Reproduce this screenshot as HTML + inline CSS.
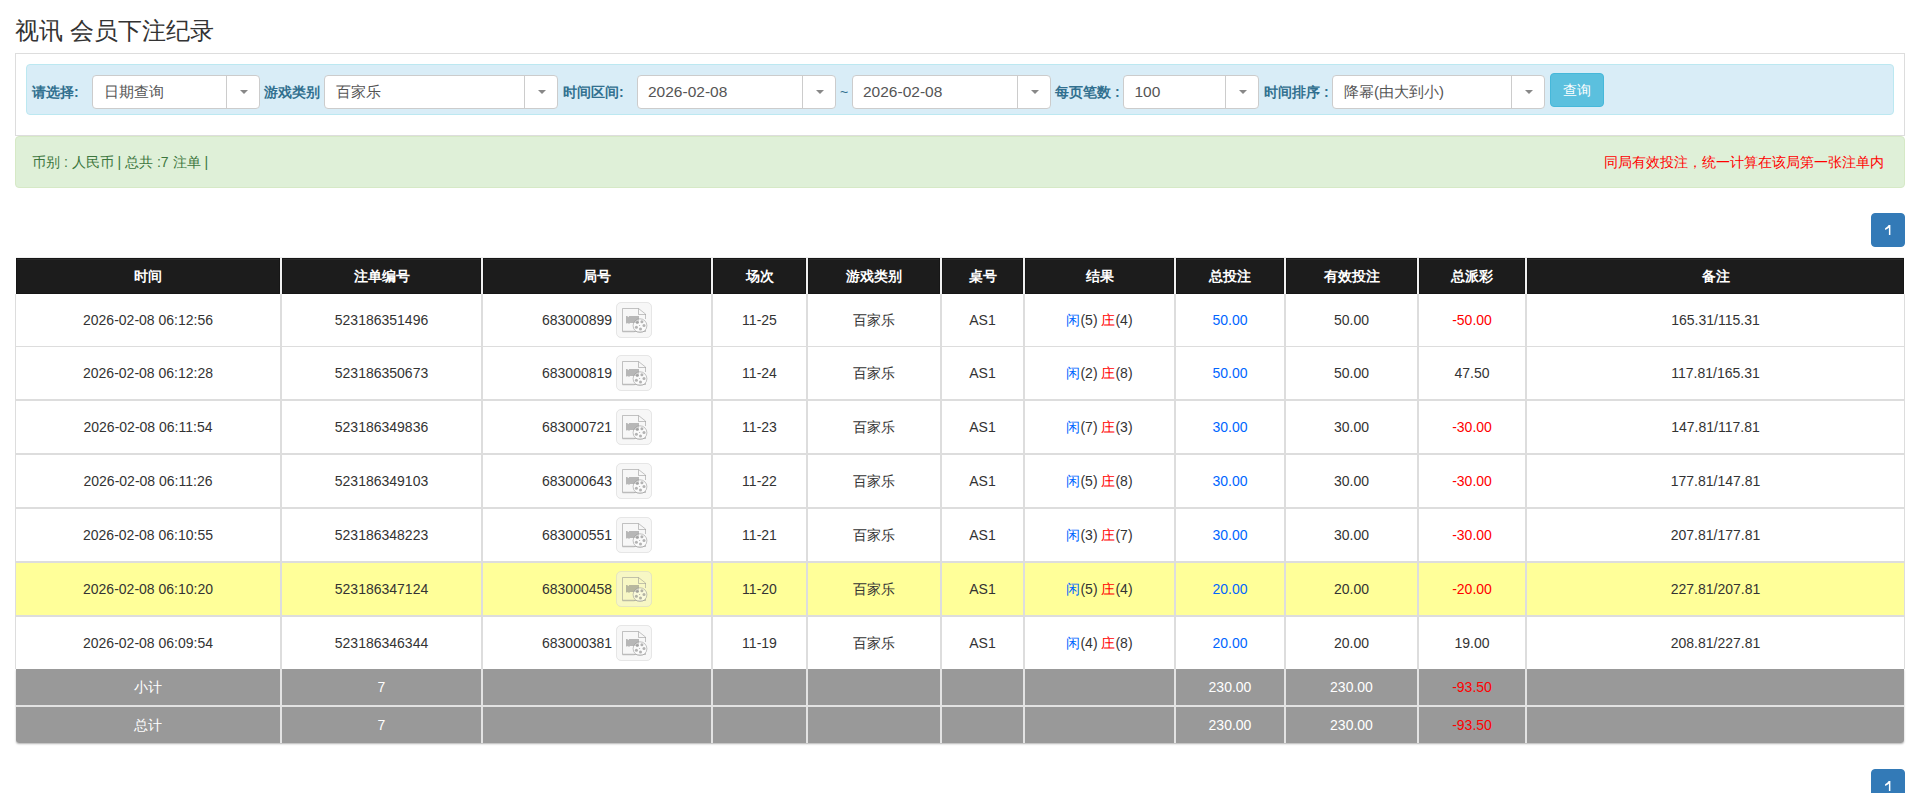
<!DOCTYPE html>
<html><head><meta charset="utf-8"><title>视讯 会员下注纪录</title>
<style>
*{box-sizing:border-box;margin:0;padding:0}
html,body{width:1919px;height:793px;overflow:hidden;background:#fff}
body{font-family:"Liberation Sans",sans-serif;font-size:14px;color:#333;position:relative}
.a{position:absolute}
.title{left:15px;top:14px;font-size:24px;line-height:34px;color:#333;white-space:nowrap}
.panel{left:15px;top:53px;width:1890px;height:83px;border:1px solid #ddd}
.info{left:26px;top:64px;width:1868px;height:51px;background:#d9edf7;border:1px solid #bce8f1;border-radius:4px}
.lbl{top:75px;height:34px;line-height:34px;font-size:14px;font-weight:bold;color:#31708f;white-space:nowrap}
.sel{top:75px;height:34px;background:#fff;border:1px solid #ccc;border-radius:4px}
.sel .t{position:absolute;left:10px;top:0;line-height:32px;font-size:15.5px;color:#555;white-space:nowrap}
.sel .t.c{font-size:15px;left:11px}
.sel .t.n{left:10.5px}
.sel .d{position:absolute;right:32px;top:0;bottom:0;width:1px;background:#ccc}
.sel .ar{position:absolute;right:11px;top:14px;width:0;height:0;border-left:4px solid transparent;border-right:4px solid transparent;border-top:4px solid #888}
.btn{left:1550px;top:73px;width:54px;height:34px;background:#5bc0de;border:1px solid #46b8da;border-radius:4px;color:#fff;font-size:14px;line-height:32px;text-align:center}
.ok{left:15px;top:136px;width:1890px;height:52px;background:#dff0d8;border:1px solid #d6e9c6;border-radius:4px}
.okt{left:32px;top:136px;height:52px;line-height:52px;color:#3c763d;font-size:14px;white-space:nowrap}
.red{left:1604px;top:136px;height:52px;line-height:52px;color:#f00;font-size:14px;white-space:nowrap}
.pg{left:1871px;width:34px;height:34px;background:#337ab7;border:1px solid #337ab7;border-radius:4px;color:#fff;text-align:center;line-height:32px;font-size:14px}
.th{top:258px;height:36px;background:#1c1c1c;border:1px solid #161616;box-shadow:inset 0 1px 0 #2a2a2a;color:#fff;font-weight:bold;text-align:center;line-height:34px;font-size:14px}
.td{text-align:center;white-space:nowrap;font-size:14px;color:#333}
.b{color:#0066ff}
.r{color:#f00}
</style></head><body>

<div class="a title">视讯 会员下注纪录</div>
<div class="a panel"></div><div class="a info"></div>
<div class="a lbl" style="left:32px">请选择:</div>
<div class="a lbl" style="left:264px">游戏类别</div>
<div class="a lbl" style="left:563px">时间区间:</div>
<div class="a lbl" style="left:1055px">每页笔数 :</div>
<div class="a lbl" style="left:1264px">时间排序 :</div>
<div class="a sel" style="left:92px;width:168px"><span class="t c">日期查询</span><span class="d"></span><span class="ar"></span></div>
<div class="a sel" style="left:324px;width:234px"><span class="t c">百家乐</span><span class="d"></span><span class="ar"></span></div>
<div class="a sel" style="left:637px;width:199px"><span class="t">2026-02-08</span><span class="d"></span><span class="ar"></span></div>
<div class="a sel" style="left:852px;width:199px"><span class="t">2026-02-08</span><span class="d"></span><span class="ar"></span></div>
<div class="a sel" style="left:1123px;width:136px"><span class="t n">100</span><span class="d"></span><span class="ar"></span></div>
<div class="a sel" style="left:1332px;width:213px"><span class="t c">降幂(由大到小)</span><span class="d"></span><span class="ar"></span></div>
<div class="a" style="left:840px;top:75px;line-height:34px;color:#31708f;font-size:14px">~</div>
<div class="a btn">查询</div>
<div class="a ok"></div>
<div class="a okt">币别 : 人民币 | 总共 :7 注单 |</div>
<div class="a red">同局有效投注，统一计算在该局第一张注单内</div>
<div class="a pg" style="top:213px"><svg width="34" height="34" viewBox="0 0 34 34" style="position:absolute;left:-1px;top:-1px"><path d="M17.9 12H19.4V22H17.9V14.7Q16.3 16.1 14.1 16.9V15.3Q16.6 14 17.7 12Z" fill="#fff"/></svg></div>
<div class="a pg" style="top:769px"><svg width="34" height="34" viewBox="0 0 34 34" style="position:absolute;left:-1px;top:-1px"><path d="M17.9 12H19.4V22H17.9V14.7Q16.3 16.1 14.1 16.9V15.3Q16.6 14 17.7 12Z" fill="#fff"/></svg></div>
<div class="a" style="left:16px;top:669px;width:1888px;height:74px;box-shadow:0 1px 2px rgba(0,0,0,.3);border-radius:0 0 3px 3px"></div>
<div class="a" style="left:16px;top:257px;width:1888px;height:37px;background:#f0f0f0"></div>
<div class="a th" style="left:16px;width:264px">时间</div>
<div class="a th" style="left:282px;width:199px">注单编号</div>
<div class="a th" style="left:483px;width:228px">局号</div>
<div class="a th" style="left:713px;width:93px">场次</div>
<div class="a th" style="left:808px;width:132px">游戏类别</div>
<div class="a th" style="left:942px;width:81px">桌号</div>
<div class="a th" style="left:1025px;width:149px">结果</div>
<div class="a th" style="left:1176px;width:108px">总投注</div>
<div class="a th" style="left:1286px;width:131px">有效投注</div>
<div class="a th" style="left:1419px;width:106px">总派彩</div>
<div class="a th" style="left:1527px;width:377px">备注</div>
<div class="a" style="left:15px;top:294px;width:1890px;height:375px;background:#fff;border-left:1px solid #ddd;border-right:1px solid #ddd"></div>
<div class="a" style="left:16px;top:563px;width:1888px;height:52px;background:#ffff99"></div>
<div class="a" style="left:16px;top:346px;width:1888px;height:1px;background:#ddd"></div>
<div class="a" style="left:16px;top:399px;width:1888px;height:2px;background:#ddd"></div>
<div class="a" style="left:16px;top:453px;width:1888px;height:2px;background:#ddd"></div>
<div class="a" style="left:16px;top:507px;width:1888px;height:2px;background:#ddd"></div>
<div class="a" style="left:16px;top:561px;width:1888px;height:2px;background:#ddd"></div>
<div class="a" style="left:16px;top:615px;width:1888px;height:2px;background:#ddd"></div>
<div class="a" style="left:280px;top:294px;width:2px;height:375px;background:#ddd"></div>
<div class="a" style="left:481px;top:294px;width:2px;height:375px;background:#ddd"></div>
<div class="a" style="left:711px;top:294px;width:2px;height:375px;background:#ddd"></div>
<div class="a" style="left:806px;top:294px;width:2px;height:375px;background:#ddd"></div>
<div class="a" style="left:940px;top:294px;width:2px;height:375px;background:#ddd"></div>
<div class="a" style="left:1023px;top:294px;width:2px;height:375px;background:#ddd"></div>
<div class="a" style="left:1174px;top:294px;width:2px;height:375px;background:#ddd"></div>
<div class="a" style="left:1284px;top:294px;width:2px;height:375px;background:#ddd"></div>
<div class="a" style="left:1417px;top:294px;width:2px;height:375px;background:#ddd"></div>
<div class="a" style="left:1525px;top:294px;width:2px;height:375px;background:#ddd"></div>
<div class="a" style="left:16px;top:669px;width:1888px;height:74px;background:#999;border-radius:0 0 3px 3px"></div>
<div class="a" style="left:16px;top:705px;width:1888px;height:2px;background:#e3e3e3"></div>
<div class="a" style="left:280px;top:669px;width:2px;height:74px;background:#e3e3e3"></div>
<div class="a" style="left:481px;top:669px;width:2px;height:74px;background:#e3e3e3"></div>
<div class="a" style="left:711px;top:669px;width:2px;height:74px;background:#e3e3e3"></div>
<div class="a" style="left:806px;top:669px;width:2px;height:74px;background:#e3e3e3"></div>
<div class="a" style="left:940px;top:669px;width:2px;height:74px;background:#e3e3e3"></div>
<div class="a" style="left:1023px;top:669px;width:2px;height:74px;background:#e3e3e3"></div>
<div class="a" style="left:1174px;top:669px;width:2px;height:74px;background:#e3e3e3"></div>
<div class="a" style="left:1284px;top:669px;width:2px;height:74px;background:#e3e3e3"></div>
<div class="a" style="left:1417px;top:669px;width:2px;height:74px;background:#e3e3e3"></div>
<div class="a" style="left:1525px;top:669px;width:2px;height:74px;background:#e3e3e3"></div>
<div class="a td" style="left:16px;top:294px;width:264px;height:52px;line-height:52px">2026-02-08 06:12:56</div>
<div class="a td" style="left:282px;top:294px;width:199px;height:52px;line-height:52px">523186351496</div>
<div class="a td" style="left:483px;top:294px;width:228px;height:52px;line-height:52px"><span style="display:inline-block;vertical-align:middle;position:relative;top:-1px">683000899</span> <span style="display:inline-block;vertical-align:middle;width:36px;height:36px;position:relative;top:-1px"><svg width="36" height="36" viewBox="0 0 36 36" style="display:block"><rect x="0.5" y="0.5" width="35" height="35" rx="4.5" fill="rgba(240,240,240,.5)" stroke="rgba(210,210,210,.5)"/>
<path d="M6.5 6.5H22.5L29.5 12V17M29.5 28V29.5H18M6.5 29.5V6.5" fill="none" stroke="rgba(140,140,140,.5)" stroke-width="1"/><path d="M6.5 29.5H18.5" fill="none" stroke="rgba(140,140,140,.55)" stroke-width="1.5"/><path d="M22.5 6.5V12.5H29.5" fill="none" stroke="rgba(140,140,140,.5)" stroke-width="1"/>
<path d="M10 14H11.2L12.3 15.2L13.2 14H23V21H13.5V22H12.5V21L10 21.5Z" fill="rgba(120,120,120,.5)"/>
<circle cx="24" cy="23.7" r="6.9" fill="rgba(255,255,255,.4)" stroke="rgba(140,140,140,.5)" stroke-width="1"/>
<g fill="rgba(120,120,120,.55)"><circle cx="21.3" cy="20.5" r="1.5"/><circle cx="25.9" cy="19.8" r="1.5"/><circle cx="28" cy="23.6" r="1.5"/><circle cx="24.5" cy="27.1" r="1.5"/><circle cx="20.4" cy="25.2" r="1.5"/><circle cx="23.6" cy="23.5" r="0.6"/></g>
</svg></span></div>
<div class="a td" style="left:713px;top:294px;width:93px;height:52px;line-height:52px">11-25</div>
<div class="a td" style="left:808px;top:294px;width:132px;height:52px;line-height:52px">百家乐</div>
<div class="a td" style="left:942px;top:294px;width:81px;height:52px;line-height:52px">AS1</div>
<div class="a td" style="left:1025px;top:294px;width:149px;height:52px;line-height:52px"><span class="b">闲</span>(5) <span class="r">庄</span>(4)</div>
<div class="a td" style="left:1176px;top:294px;width:108px;height:52px;line-height:52px"><span class="b">50.00</span></div>
<div class="a td" style="left:1286px;top:294px;width:131px;height:52px;line-height:52px">50.00</div>
<div class="a td" style="left:1419px;top:294px;width:106px;height:52px;line-height:52px"><span class="r">-50.00</span></div>
<div class="a td" style="left:1527px;top:294px;width:377px;height:52px;line-height:52px">165.31/115.31</div>
<div class="a td" style="left:16px;top:347px;width:264px;height:52px;line-height:52px">2026-02-08 06:12:28</div>
<div class="a td" style="left:282px;top:347px;width:199px;height:52px;line-height:52px">523186350673</div>
<div class="a td" style="left:483px;top:347px;width:228px;height:52px;line-height:52px"><span style="display:inline-block;vertical-align:middle;position:relative;top:-1px">683000819</span> <span style="display:inline-block;vertical-align:middle;width:36px;height:36px;position:relative;top:-1px"><svg width="36" height="36" viewBox="0 0 36 36" style="display:block"><rect x="0.5" y="0.5" width="35" height="35" rx="4.5" fill="rgba(240,240,240,.5)" stroke="rgba(210,210,210,.5)"/>
<path d="M6.5 6.5H22.5L29.5 12V17M29.5 28V29.5H18M6.5 29.5V6.5" fill="none" stroke="rgba(140,140,140,.5)" stroke-width="1"/><path d="M6.5 29.5H18.5" fill="none" stroke="rgba(140,140,140,.55)" stroke-width="1.5"/><path d="M22.5 6.5V12.5H29.5" fill="none" stroke="rgba(140,140,140,.5)" stroke-width="1"/>
<path d="M10 14H11.2L12.3 15.2L13.2 14H23V21H13.5V22H12.5V21L10 21.5Z" fill="rgba(120,120,120,.5)"/>
<circle cx="24" cy="23.7" r="6.9" fill="rgba(255,255,255,.4)" stroke="rgba(140,140,140,.5)" stroke-width="1"/>
<g fill="rgba(120,120,120,.55)"><circle cx="21.3" cy="20.5" r="1.5"/><circle cx="25.9" cy="19.8" r="1.5"/><circle cx="28" cy="23.6" r="1.5"/><circle cx="24.5" cy="27.1" r="1.5"/><circle cx="20.4" cy="25.2" r="1.5"/><circle cx="23.6" cy="23.5" r="0.6"/></g>
</svg></span></div>
<div class="a td" style="left:713px;top:347px;width:93px;height:52px;line-height:52px">11-24</div>
<div class="a td" style="left:808px;top:347px;width:132px;height:52px;line-height:52px">百家乐</div>
<div class="a td" style="left:942px;top:347px;width:81px;height:52px;line-height:52px">AS1</div>
<div class="a td" style="left:1025px;top:347px;width:149px;height:52px;line-height:52px"><span class="b">闲</span>(2) <span class="r">庄</span>(8)</div>
<div class="a td" style="left:1176px;top:347px;width:108px;height:52px;line-height:52px"><span class="b">50.00</span></div>
<div class="a td" style="left:1286px;top:347px;width:131px;height:52px;line-height:52px">50.00</div>
<div class="a td" style="left:1419px;top:347px;width:106px;height:52px;line-height:52px">47.50</div>
<div class="a td" style="left:1527px;top:347px;width:377px;height:52px;line-height:52px">117.81/165.31</div>
<div class="a td" style="left:16px;top:401px;width:264px;height:52px;line-height:52px">2026-02-08 06:11:54</div>
<div class="a td" style="left:282px;top:401px;width:199px;height:52px;line-height:52px">523186349836</div>
<div class="a td" style="left:483px;top:401px;width:228px;height:52px;line-height:52px"><span style="display:inline-block;vertical-align:middle;position:relative;top:-1px">683000721</span> <span style="display:inline-block;vertical-align:middle;width:36px;height:36px;position:relative;top:-1px"><svg width="36" height="36" viewBox="0 0 36 36" style="display:block"><rect x="0.5" y="0.5" width="35" height="35" rx="4.5" fill="rgba(240,240,240,.5)" stroke="rgba(210,210,210,.5)"/>
<path d="M6.5 6.5H22.5L29.5 12V17M29.5 28V29.5H18M6.5 29.5V6.5" fill="none" stroke="rgba(140,140,140,.5)" stroke-width="1"/><path d="M6.5 29.5H18.5" fill="none" stroke="rgba(140,140,140,.55)" stroke-width="1.5"/><path d="M22.5 6.5V12.5H29.5" fill="none" stroke="rgba(140,140,140,.5)" stroke-width="1"/>
<path d="M10 14H11.2L12.3 15.2L13.2 14H23V21H13.5V22H12.5V21L10 21.5Z" fill="rgba(120,120,120,.5)"/>
<circle cx="24" cy="23.7" r="6.9" fill="rgba(255,255,255,.4)" stroke="rgba(140,140,140,.5)" stroke-width="1"/>
<g fill="rgba(120,120,120,.55)"><circle cx="21.3" cy="20.5" r="1.5"/><circle cx="25.9" cy="19.8" r="1.5"/><circle cx="28" cy="23.6" r="1.5"/><circle cx="24.5" cy="27.1" r="1.5"/><circle cx="20.4" cy="25.2" r="1.5"/><circle cx="23.6" cy="23.5" r="0.6"/></g>
</svg></span></div>
<div class="a td" style="left:713px;top:401px;width:93px;height:52px;line-height:52px">11-23</div>
<div class="a td" style="left:808px;top:401px;width:132px;height:52px;line-height:52px">百家乐</div>
<div class="a td" style="left:942px;top:401px;width:81px;height:52px;line-height:52px">AS1</div>
<div class="a td" style="left:1025px;top:401px;width:149px;height:52px;line-height:52px"><span class="b">闲</span>(7) <span class="r">庄</span>(3)</div>
<div class="a td" style="left:1176px;top:401px;width:108px;height:52px;line-height:52px"><span class="b">30.00</span></div>
<div class="a td" style="left:1286px;top:401px;width:131px;height:52px;line-height:52px">30.00</div>
<div class="a td" style="left:1419px;top:401px;width:106px;height:52px;line-height:52px"><span class="r">-30.00</span></div>
<div class="a td" style="left:1527px;top:401px;width:377px;height:52px;line-height:52px">147.81/117.81</div>
<div class="a td" style="left:16px;top:455px;width:264px;height:52px;line-height:52px">2026-02-08 06:11:26</div>
<div class="a td" style="left:282px;top:455px;width:199px;height:52px;line-height:52px">523186349103</div>
<div class="a td" style="left:483px;top:455px;width:228px;height:52px;line-height:52px"><span style="display:inline-block;vertical-align:middle;position:relative;top:-1px">683000643</span> <span style="display:inline-block;vertical-align:middle;width:36px;height:36px;position:relative;top:-1px"><svg width="36" height="36" viewBox="0 0 36 36" style="display:block"><rect x="0.5" y="0.5" width="35" height="35" rx="4.5" fill="rgba(240,240,240,.5)" stroke="rgba(210,210,210,.5)"/>
<path d="M6.5 6.5H22.5L29.5 12V17M29.5 28V29.5H18M6.5 29.5V6.5" fill="none" stroke="rgba(140,140,140,.5)" stroke-width="1"/><path d="M6.5 29.5H18.5" fill="none" stroke="rgba(140,140,140,.55)" stroke-width="1.5"/><path d="M22.5 6.5V12.5H29.5" fill="none" stroke="rgba(140,140,140,.5)" stroke-width="1"/>
<path d="M10 14H11.2L12.3 15.2L13.2 14H23V21H13.5V22H12.5V21L10 21.5Z" fill="rgba(120,120,120,.5)"/>
<circle cx="24" cy="23.7" r="6.9" fill="rgba(255,255,255,.4)" stroke="rgba(140,140,140,.5)" stroke-width="1"/>
<g fill="rgba(120,120,120,.55)"><circle cx="21.3" cy="20.5" r="1.5"/><circle cx="25.9" cy="19.8" r="1.5"/><circle cx="28" cy="23.6" r="1.5"/><circle cx="24.5" cy="27.1" r="1.5"/><circle cx="20.4" cy="25.2" r="1.5"/><circle cx="23.6" cy="23.5" r="0.6"/></g>
</svg></span></div>
<div class="a td" style="left:713px;top:455px;width:93px;height:52px;line-height:52px">11-22</div>
<div class="a td" style="left:808px;top:455px;width:132px;height:52px;line-height:52px">百家乐</div>
<div class="a td" style="left:942px;top:455px;width:81px;height:52px;line-height:52px">AS1</div>
<div class="a td" style="left:1025px;top:455px;width:149px;height:52px;line-height:52px"><span class="b">闲</span>(5) <span class="r">庄</span>(8)</div>
<div class="a td" style="left:1176px;top:455px;width:108px;height:52px;line-height:52px"><span class="b">30.00</span></div>
<div class="a td" style="left:1286px;top:455px;width:131px;height:52px;line-height:52px">30.00</div>
<div class="a td" style="left:1419px;top:455px;width:106px;height:52px;line-height:52px"><span class="r">-30.00</span></div>
<div class="a td" style="left:1527px;top:455px;width:377px;height:52px;line-height:52px">177.81/147.81</div>
<div class="a td" style="left:16px;top:509px;width:264px;height:52px;line-height:52px">2026-02-08 06:10:55</div>
<div class="a td" style="left:282px;top:509px;width:199px;height:52px;line-height:52px">523186348223</div>
<div class="a td" style="left:483px;top:509px;width:228px;height:52px;line-height:52px"><span style="display:inline-block;vertical-align:middle;position:relative;top:-1px">683000551</span> <span style="display:inline-block;vertical-align:middle;width:36px;height:36px;position:relative;top:-1px"><svg width="36" height="36" viewBox="0 0 36 36" style="display:block"><rect x="0.5" y="0.5" width="35" height="35" rx="4.5" fill="rgba(240,240,240,.5)" stroke="rgba(210,210,210,.5)"/>
<path d="M6.5 6.5H22.5L29.5 12V17M29.5 28V29.5H18M6.5 29.5V6.5" fill="none" stroke="rgba(140,140,140,.5)" stroke-width="1"/><path d="M6.5 29.5H18.5" fill="none" stroke="rgba(140,140,140,.55)" stroke-width="1.5"/><path d="M22.5 6.5V12.5H29.5" fill="none" stroke="rgba(140,140,140,.5)" stroke-width="1"/>
<path d="M10 14H11.2L12.3 15.2L13.2 14H23V21H13.5V22H12.5V21L10 21.5Z" fill="rgba(120,120,120,.5)"/>
<circle cx="24" cy="23.7" r="6.9" fill="rgba(255,255,255,.4)" stroke="rgba(140,140,140,.5)" stroke-width="1"/>
<g fill="rgba(120,120,120,.55)"><circle cx="21.3" cy="20.5" r="1.5"/><circle cx="25.9" cy="19.8" r="1.5"/><circle cx="28" cy="23.6" r="1.5"/><circle cx="24.5" cy="27.1" r="1.5"/><circle cx="20.4" cy="25.2" r="1.5"/><circle cx="23.6" cy="23.5" r="0.6"/></g>
</svg></span></div>
<div class="a td" style="left:713px;top:509px;width:93px;height:52px;line-height:52px">11-21</div>
<div class="a td" style="left:808px;top:509px;width:132px;height:52px;line-height:52px">百家乐</div>
<div class="a td" style="left:942px;top:509px;width:81px;height:52px;line-height:52px">AS1</div>
<div class="a td" style="left:1025px;top:509px;width:149px;height:52px;line-height:52px"><span class="b">闲</span>(3) <span class="r">庄</span>(7)</div>
<div class="a td" style="left:1176px;top:509px;width:108px;height:52px;line-height:52px"><span class="b">30.00</span></div>
<div class="a td" style="left:1286px;top:509px;width:131px;height:52px;line-height:52px">30.00</div>
<div class="a td" style="left:1419px;top:509px;width:106px;height:52px;line-height:52px"><span class="r">-30.00</span></div>
<div class="a td" style="left:1527px;top:509px;width:377px;height:52px;line-height:52px">207.81/177.81</div>
<div class="a td" style="left:16px;top:563px;width:264px;height:52px;line-height:52px">2026-02-08 06:10:20</div>
<div class="a td" style="left:282px;top:563px;width:199px;height:52px;line-height:52px">523186347124</div>
<div class="a td" style="left:483px;top:563px;width:228px;height:52px;line-height:52px"><span style="display:inline-block;vertical-align:middle;position:relative;top:-1px">683000458</span> <span style="display:inline-block;vertical-align:middle;width:36px;height:36px;position:relative;top:-1px"><svg width="36" height="36" viewBox="0 0 36 36" style="display:block"><rect x="0.5" y="0.5" width="35" height="35" rx="4.5" fill="rgba(240,240,240,.5)" stroke="rgba(210,210,210,.5)"/>
<path d="M6.5 6.5H22.5L29.5 12V17M29.5 28V29.5H18M6.5 29.5V6.5" fill="none" stroke="rgba(140,140,140,.5)" stroke-width="1"/><path d="M6.5 29.5H18.5" fill="none" stroke="rgba(140,140,140,.55)" stroke-width="1.5"/><path d="M22.5 6.5V12.5H29.5" fill="none" stroke="rgba(140,140,140,.5)" stroke-width="1"/>
<path d="M10 14H11.2L12.3 15.2L13.2 14H23V21H13.5V22H12.5V21L10 21.5Z" fill="rgba(120,120,120,.5)"/>
<circle cx="24" cy="23.7" r="6.9" fill="rgba(255,255,255,.4)" stroke="rgba(140,140,140,.5)" stroke-width="1"/>
<g fill="rgba(120,120,120,.55)"><circle cx="21.3" cy="20.5" r="1.5"/><circle cx="25.9" cy="19.8" r="1.5"/><circle cx="28" cy="23.6" r="1.5"/><circle cx="24.5" cy="27.1" r="1.5"/><circle cx="20.4" cy="25.2" r="1.5"/><circle cx="23.6" cy="23.5" r="0.6"/></g>
</svg></span></div>
<div class="a td" style="left:713px;top:563px;width:93px;height:52px;line-height:52px">11-20</div>
<div class="a td" style="left:808px;top:563px;width:132px;height:52px;line-height:52px">百家乐</div>
<div class="a td" style="left:942px;top:563px;width:81px;height:52px;line-height:52px">AS1</div>
<div class="a td" style="left:1025px;top:563px;width:149px;height:52px;line-height:52px"><span class="b">闲</span>(5) <span class="r">庄</span>(4)</div>
<div class="a td" style="left:1176px;top:563px;width:108px;height:52px;line-height:52px"><span class="b">20.00</span></div>
<div class="a td" style="left:1286px;top:563px;width:131px;height:52px;line-height:52px">20.00</div>
<div class="a td" style="left:1419px;top:563px;width:106px;height:52px;line-height:52px"><span class="r">-20.00</span></div>
<div class="a td" style="left:1527px;top:563px;width:377px;height:52px;line-height:52px">227.81/207.81</div>
<div class="a td" style="left:16px;top:617px;width:264px;height:52px;line-height:52px">2026-02-08 06:09:54</div>
<div class="a td" style="left:282px;top:617px;width:199px;height:52px;line-height:52px">523186346344</div>
<div class="a td" style="left:483px;top:617px;width:228px;height:52px;line-height:52px"><span style="display:inline-block;vertical-align:middle;position:relative;top:-1px">683000381</span> <span style="display:inline-block;vertical-align:middle;width:36px;height:36px;position:relative;top:-1px"><svg width="36" height="36" viewBox="0 0 36 36" style="display:block"><rect x="0.5" y="0.5" width="35" height="35" rx="4.5" fill="rgba(240,240,240,.5)" stroke="rgba(210,210,210,.5)"/>
<path d="M6.5 6.5H22.5L29.5 12V17M29.5 28V29.5H18M6.5 29.5V6.5" fill="none" stroke="rgba(140,140,140,.5)" stroke-width="1"/><path d="M6.5 29.5H18.5" fill="none" stroke="rgba(140,140,140,.55)" stroke-width="1.5"/><path d="M22.5 6.5V12.5H29.5" fill="none" stroke="rgba(140,140,140,.5)" stroke-width="1"/>
<path d="M10 14H11.2L12.3 15.2L13.2 14H23V21H13.5V22H12.5V21L10 21.5Z" fill="rgba(120,120,120,.5)"/>
<circle cx="24" cy="23.7" r="6.9" fill="rgba(255,255,255,.4)" stroke="rgba(140,140,140,.5)" stroke-width="1"/>
<g fill="rgba(120,120,120,.55)"><circle cx="21.3" cy="20.5" r="1.5"/><circle cx="25.9" cy="19.8" r="1.5"/><circle cx="28" cy="23.6" r="1.5"/><circle cx="24.5" cy="27.1" r="1.5"/><circle cx="20.4" cy="25.2" r="1.5"/><circle cx="23.6" cy="23.5" r="0.6"/></g>
</svg></span></div>
<div class="a td" style="left:713px;top:617px;width:93px;height:52px;line-height:52px">11-19</div>
<div class="a td" style="left:808px;top:617px;width:132px;height:52px;line-height:52px">百家乐</div>
<div class="a td" style="left:942px;top:617px;width:81px;height:52px;line-height:52px">AS1</div>
<div class="a td" style="left:1025px;top:617px;width:149px;height:52px;line-height:52px"><span class="b">闲</span>(4) <span class="r">庄</span>(8)</div>
<div class="a td" style="left:1176px;top:617px;width:108px;height:52px;line-height:52px"><span class="b">20.00</span></div>
<div class="a td" style="left:1286px;top:617px;width:131px;height:52px;line-height:52px">20.00</div>
<div class="a td" style="left:1419px;top:617px;width:106px;height:52px;line-height:52px">19.00</div>
<div class="a td" style="left:1527px;top:617px;width:377px;height:52px;line-height:52px">208.81/227.81</div>
<div class="a td" style="left:16px;top:669px;width:264px;height:36px;line-height:36px;color:#fff">小计</div>
<div class="a td" style="left:282px;top:669px;width:199px;height:36px;line-height:36px;color:#fff">7</div>
<div class="a td" style="left:1176px;top:669px;width:108px;height:36px;line-height:36px;color:#fff">230.00</div>
<div class="a td" style="left:1286px;top:669px;width:131px;height:36px;line-height:36px;color:#fff">230.00</div>
<div class="a td" style="left:1419px;top:669px;width:106px;height:36px;line-height:36px;color:#fff"><span class="r">-93.50</span></div>
<div class="a td" style="left:16px;top:707px;width:264px;height:36px;line-height:36px;color:#fff">总计</div>
<div class="a td" style="left:282px;top:707px;width:199px;height:36px;line-height:36px;color:#fff">7</div>
<div class="a td" style="left:1176px;top:707px;width:108px;height:36px;line-height:36px;color:#fff">230.00</div>
<div class="a td" style="left:1286px;top:707px;width:131px;height:36px;line-height:36px;color:#fff">230.00</div>
<div class="a td" style="left:1419px;top:707px;width:106px;height:36px;line-height:36px;color:#fff"><span class="r">-93.50</span></div>
</body></html>
